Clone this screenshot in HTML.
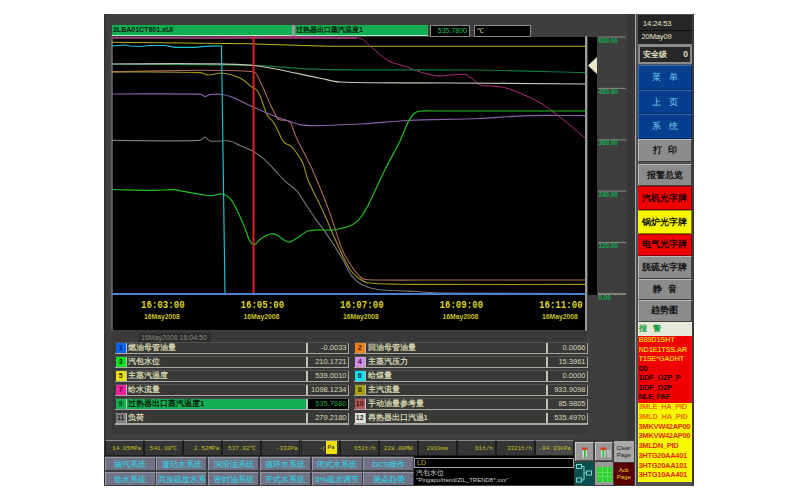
<!DOCTYPE html>
<html><head><meta charset="utf-8">
<style>
*{margin:0;padding:0;box-sizing:border-box}
html,body{width:800px;height:500px;background:#fff;overflow:hidden;font-family:"Liberation Sans",sans-serif}
.a{position:absolute}
svg{position:absolute;left:0;top:0}
.gb{background:#12ae52;color:#03200a;font-size:7px;font-weight:bold;line-height:10px;white-space:nowrap;overflow:hidden;border-bottom:1px solid #b0e8c8}
.axl{left:598.5px;color:#10b050;font-size:6.3px;line-height:6px;font-weight:bold}
.tl{top:300.5px;color:#d8d020;font-size:9.1px;line-height:8px;font-weight:bold;font-family:"Liberation Mono",monospace;white-space:nowrap;transform:scaleY(1.22);transform-origin:0 0}
.dl{top:313.5px;color:#c8c020;font-size:6.8px;line-height:6px;white-space:nowrap;font-weight:bold}
.cb{width:9.5px;height:10px;font-size:7px;line-height:10px;text-align:center;font-weight:bold}
.nf{height:10px;font-size:7.5px;font-weight:bold;line-height:10px;padding-left:1.5px;white-space:nowrap;overflow:hidden}
.sep{width:2px;height:10px;background:#c0c0b8}
.vf{height:10px;font-size:7.5px;line-height:10px;text-align:right;padding-right:1px;white-space:nowrap}
.rbd{height:1.5px;background:#a8a8a0}
.st{top:439.5px;height:16px;font-size:6px;line-height:15px;color:#c8c020;font-family:"Liberation Mono",monospace;white-space:nowrap;border:1px solid #1c1c1c;border-top:1px solid #8a8a8a;padding:0 2px}
.hl{background:#f0e010;color:#202000;display:inline-block;width:11px;height:13px;line-height:13px;vertical-align:middle;text-align:center}
.nb{width:51px;height:14px;background:#727286;color:#18e0f0;font-size:8px;line-height:13px;text-align:center;white-space:nowrap;overflow:hidden;border-top:1px solid #9a9aa6;border-left:1px solid #9a9aa6;border-right:1px solid #3a3a44;border-bottom:1px solid #3a3a44}
.rt{color:#e8e8c8;font-size:7.5px;line-height:8px;white-space:nowrap;letter-spacing:-0.1px}
.rb{left:637.5px;width:54.5px;font-size:8.5px;text-align:center;white-space:nowrap;border:1px solid;font-family:"Liberation Serif",serif;font-weight:bold}
.bl{background:#073e8e;color:#70d0f0;font-weight:normal !important;border-color:#2a6ac0 #062a60 #062a60 #2a6ac0}
.gr{background:#8c8c8c;color:#101010;border-color:#b8b8b8 #404040 #404040 #b8b8b8}
.rd{background:#f00000;color:#200000;border-color:#a00000 #800000 #800000 #f00000}
.yl{background:#f8f800;color:#101000;border-color:#a0a000 #808000 #808000 #f8f800}
.al{left:638.5px;font-size:7.5px;line-height:9px;white-space:nowrap;overflow:hidden;width:53px;font-weight:bold;letter-spacing:-0.3px}
.ib{border-top:1px solid #c8c8c8;border-left:1px solid #c8c8c8;border-right:1px solid #505050;border-bottom:1px solid #505050}
#wrap{position:absolute;left:0;top:0;width:800px;height:500px;}
</style></head><body><div id="wrap">

<div class="a" style="left:104px;top:14px;width:531px;height:472px;background:#3e3e3e;border-left:2px solid #333"></div>
<div class="a" style="left:627px;top:14px;width:8px;height:425px;background:#373737"></div>
<div class="a" style="left:112px;top:331px;width:475px;height:103px;background:#393939"></div>
<div class="a gb" style="left:112px;top:25px;width:180px;height:11px;padding-left:1px">3LBA01CT601.xUI</div>
<div class="a" style="left:292px;top:25px;width:3px;height:11px;background:#9a9a9a"></div>
<div class="a gb" style="left:295px;top:25px;width:133px;height:11px;padding-left:1px">过热器出口蒸汽温度1</div>
<div class="a" style="left:430px;top:25px;width:40px;height:12px;background:#000;border:1px solid #8a8a8a;color:#18c060;font-size:7px;line-height:10px;text-align:right;padding-right:2px">535.7800</div>
<div class="a" style="left:474px;top:25px;width:57px;height:12px;background:#000;border:1px solid #8a8a8a;color:#d8d8c0;font-size:7px;line-height:10px;padding-left:2px">℃</div>
<div class="a" style="left:112px;top:37px;width:474px;height:293px;background:#000"></div>
<div class="a" style="left:588px;top:37px;width:9px;height:258px;background:#000"></div>
<svg width="800" height="500" viewBox="0 0 800 500"><g fill="none" stroke-linejoin="round" stroke-linecap="round">
<line x1="112" y1="37" x2="112" y2="330" stroke="#707070" stroke-width="1.5"/>
<line x1="586" y1="37" x2="586" y2="330" stroke="#9a9a9a" stroke-width="2"/>
<path d="M112.0,42.3 L250.0,43.8 L330.0,46.2 L585.0,46.3" stroke="#b8b020" stroke-width="1.08"/>
<path d="M112.0,38.0 C194.0,38.0 276.1,34.9 358.0,38.0 C363.7,38.2 367.5,44.4 372.0,47.8 C377.5,51.9 382.0,57.3 388.0,60.6 C393.9,63.8 400.7,64.8 407.0,67.0 C411.4,68.6 415.5,70.7 420.0,72.0 C425.9,73.7 431.9,75.4 438.0,76.0 C442.0,76.4 446.0,75.2 450.0,75.0 C455.0,74.7 460.0,74.0 465.0,74.5 C466.9,74.7 468.4,76.0 470.0,77.0 C471.8,78.2 473.3,79.7 475.0,81.0 C476.7,82.3 478.0,84.3 480.0,85.0 C483.2,86.1 486.7,85.7 490.0,86.0 C493.3,86.3 496.7,86.3 500.0,86.8 C503.4,87.3 506.8,88.1 510.0,89.2 C515.5,91.1 520.8,93.4 526.0,95.8 C531.4,98.3 536.9,100.7 542.0,103.8 C547.0,106.8 551.4,110.7 556.0,114.2 C560.7,117.8 565.4,121.4 570.0,125.2 C575.1,129.4 580.0,133.7 585.0,138.0" stroke="#b02a78" stroke-width="0.99"/>
<path d="M112.0,64.0 C159.0,64.5 206.0,64.2 253.0,65.4 C275.4,66.0 297.6,68.9 320.0,69.4 C370.0,70.5 420.0,69.4 470.0,70.0 C508.3,70.5 546.7,71.7 585.0,72.6" stroke="#0e7a40" stroke-width="1.17"/>
<path d="M112.0,64.0 C141.3,63.9 170.7,63.5 200.0,63.8 C217.7,64.0 235.5,63.3 253.0,65.4 C275.6,68.1 297.7,73.9 320.0,78.2 C326.7,79.5 333.2,81.7 340.0,82.0 C376.6,83.4 413.3,82.7 450.0,83.0 C495.0,83.4 540.0,83.7 585.0,84.0" stroke="#c8c8b8" stroke-width="1.17"/>
<path d="M112.0,71.6 C159.0,71.7 206.1,68.2 253.0,71.8 C257.5,72.1 258.7,79.0 260.8,83.0 C264.4,89.7 266.9,96.9 270.0,103.8 C271.1,106.3 272.3,108.8 273.6,111.2 C275.1,113.9 275.8,117.5 278.4,119.2 C281.1,121.0 285.0,119.7 288.0,120.8 C289.4,121.3 290.5,122.7 291.2,124.0 C293.2,128.1 294.1,132.6 296.0,136.8 C298.4,142.2 301.3,147.5 304.0,152.8 C306.7,158.1 309.6,163.3 312.0,168.8 C317.9,182.4 323.6,196.1 328.8,210.0 C333.7,223.2 337.1,237.0 342.4,250.0 C344.8,256.0 348.4,261.5 352.0,266.8 C354.8,270.9 357.8,274.9 361.6,278.0 C363.3,279.4 365.8,279.7 368.0,279.8 C392.0,280.4 416.0,280.0 440.0,280.0 C488.3,280.0 536.7,280.0 585.0,280.0" stroke="#b06858" stroke-width="1.08"/>
<path d="M112.0,72.0 C141.3,72.2 170.7,71.7 200.0,72.6 C202.8,72.7 205.2,74.9 208.0,75.0 C212.7,75.1 217.3,72.6 222.0,73.0 C228.2,73.6 234.4,75.3 240.0,78.0 C244.9,80.3 248.6,84.6 253.0,87.8 C254.5,88.9 256.6,89.4 257.6,91.0 C259.8,94.3 260.9,98.3 262.4,102.0 C264.1,106.3 265.0,111.0 267.2,115.0 C268.8,117.9 271.8,119.7 273.6,122.4 C275.9,125.9 277.3,129.9 279.2,133.6 C280.7,136.6 281.7,140.0 284.0,142.4 C285.9,144.4 289.1,144.6 291.2,146.4 C293.8,148.7 295.7,151.6 297.6,154.4 C299.7,157.5 301.8,160.6 303.2,164.0 C305.3,169.2 305.9,174.9 308.0,180.0 C312.3,190.2 317.8,199.9 322.4,210.0 C328.5,223.2 333.8,236.8 340.0,250.0 C343.2,256.8 346.3,263.7 350.4,270.0 C352.5,273.2 355.4,275.8 358.4,278.0 C361.3,280.1 364.5,282.3 368.0,282.8 C378.6,284.4 389.3,284.0 400.0,284.2 C413.3,284.5 426.7,284.4 440.0,284.4 C488.3,284.5 536.7,284.4 585.0,284.4" stroke="#a09818" stroke-width="1.08"/>
<path d="M112.0,94.0 C141.3,94.1 170.7,93.4 200.0,94.2 C201.8,94.2 203.2,96.4 205.0,96.5 C206.8,96.6 208.2,94.7 210.0,94.5 C214.0,94.0 218.0,94.0 222.0,94.5 C225.4,94.9 228.8,95.9 232.0,97.0 C234.8,98.0 237.3,99.5 240.0,100.8 C244.3,102.9 248.6,105.0 253.0,107.0 C259.3,109.8 265.6,112.7 272.0,115.2 C277.3,117.3 282.6,119.0 288.0,120.8 C292.2,122.2 296.4,124.0 300.8,124.8 C305.5,125.6 310.3,125.7 315.0,125.6 C330.0,125.4 345.0,124.8 360.0,124.0 C376.0,123.1 392.0,121.2 408.0,120.5 C432.0,119.4 456.0,119.5 480.0,118.5 C496.0,117.8 512.0,116.0 528.0,115.6 C547.0,115.1 566.0,115.6 585.0,115.6" stroke="#8860a8" stroke-width="1.17"/>
<path d="M112.0,140.4 C141.3,140.4 170.7,141.5 200.0,140.4 C202.0,140.3 203.0,136.9 205.0,137.0 C207.1,137.1 207.9,140.7 210.0,141.0 C216.6,142.1 223.4,140.0 230.0,141.0 C233.6,141.6 236.6,144.1 240.0,145.6 C244.3,147.5 248.9,148.9 253.0,151.2 C256.9,153.4 260.6,156.3 264.0,159.2 C267.4,162.1 270.5,165.5 273.6,168.8 C276.9,172.2 279.9,175.8 283.2,179.2 C284.7,180.8 286.3,182.2 288.0,183.6 C290.9,186.1 294.3,187.9 296.8,190.8 C300.5,195.2 303.2,200.4 306.4,205.2 C309.6,210.0 312.7,214.9 316.0,219.6 C319.1,224.0 322.6,228.0 325.6,232.4 C331.4,241.1 337.0,249.9 342.4,258.8 C345.8,264.5 348.0,271.1 352.0,276.4 C354.5,279.7 357.9,282.4 361.6,284.4 C366.1,286.8 371.0,288.4 376.0,289.2 C383.9,290.5 392.0,290.3 400.0,290.8 C405.3,291.1 410.7,291.2 416.0,291.5 C424.0,291.9 432.0,292.9 440.0,293.0 C488.3,293.6 536.7,293.3 585.0,293.5" stroke="#7a7a7a" stroke-width="1.08"/>
<path d="M112.0,189.5 C126.3,189.8 140.7,190.4 155.0,190.4 C160.7,190.4 166.3,189.4 172.0,189.6 C175.4,189.7 178.7,190.6 182.0,191.2 C189.0,192.4 196.0,193.8 203.0,194.8 C206.0,195.2 209.0,195.7 212.0,195.6 C215.4,195.5 218.7,193.4 222.0,194.0 C225.2,194.6 228.3,196.3 230.4,198.8 C234.0,203.0 235.9,208.3 238.4,213.2 C240.7,217.9 242.8,222.7 244.8,227.6 C246.5,231.8 247.3,236.4 249.6,240.4 C250.6,242.2 252.3,244.7 254.4,244.4 C257.2,244.0 258.4,240.3 260.8,238.8 C263.8,236.9 266.9,234.8 270.4,234.0 C272.5,233.5 274.8,234.1 276.8,235.0 C280.8,236.8 283.7,241.1 288.0,242.0 C290.8,242.6 293.5,240.2 296.0,238.8 C300.4,236.4 303.9,232.0 308.8,230.8 C316.3,229.0 324.3,230.5 332.0,230.0 C334.7,229.8 337.4,229.4 340.0,228.8 C343.3,228.1 346.7,227.4 349.8,226.0 C352.9,224.6 355.8,222.8 358.2,220.4 C361.0,217.6 363.1,214.0 365.2,210.6 C367.8,206.2 370.0,201.6 372.2,197.0 C377.1,186.8 381.6,176.4 386.6,166.3 C390.6,158.3 395.3,150.8 399.2,142.8 C402.5,136.0 404.8,128.8 408.2,122.1 C409.7,119.2 411.3,116.3 413.6,114.0 C415.0,112.6 417.0,111.7 419.0,111.3 C422.6,110.6 426.3,111.0 430.0,111.0 C481.7,110.9 533.3,111.0 585.0,111.0" stroke="#20c020" stroke-width="1.17"/>
<path d="M112.0,46.0 L118.0,45.5 L125.0,45.0 L130.0,46.0 L140.0,46.5 L150.0,45.5 L165.0,45.5 L175.0,47.3 L195.0,47.3 L205.0,46.3 L215.0,45.8 L221.5,46.0 L225.0,294.0" stroke="#20c0d0" stroke-width="1.17"/>
<line x1="112" y1="38" x2="356" y2="38" stroke="#8a3468" stroke-width="1.8"/>
<line x1="253.5" y1="37" x2="253.5" y2="294" stroke="#e02020" stroke-width="2"/>
<line x1="112" y1="294" x2="585" y2="294" stroke="#4a80d0" stroke-width="2"/>
</g><polygon points="588,65.5 597,57 597,74" fill="#e8e8c8"/><g stroke="#8a8a80" stroke-width="1">
<line x1="598" y1="37" x2="626" y2="37"/>
<line x1="598" y1="88.4" x2="626" y2="88.4"/>
<line x1="598" y1="139.8" x2="626" y2="139.8"/>
<line x1="598" y1="191.2" x2="626" y2="191.2"/>
<line x1="598" y1="242.6" x2="626" y2="242.6"/>
<line x1="598" y1="294" x2="626" y2="294" stroke="#c8c8b0"/></g></svg>
<div class="a axl" style="top:38px">600.00</div>
<div class="a axl" style="top:89px">480.00</div>
<div class="a axl" style="top:140px">360.00</div>
<div class="a axl" style="top:192px">240.00</div>
<div class="a axl" style="top:243px">120.00</div>
<div class="a axl" style="top:295px">0.00</div>
<div class="a tl" style="left:141.0px">16:03:00</div>
<div class="a dl" style="left:144.0px">16May2008</div>
<div class="a tl" style="left:240.5px">16:05:00</div>
<div class="a dl" style="left:243.5px">16May2008</div>
<div class="a tl" style="left:340.0px">16:07:00</div>
<div class="a dl" style="left:343.0px">16May2008</div>
<div class="a tl" style="left:439.5px">16:09:00</div>
<div class="a dl" style="left:442.5px">16May2008</div>
<div class="a tl" style="left:539.0px">16:11:00</div>
<div class="a dl" style="left:542.0px">16May2008</div>
<div class="a" style="left:139px;top:333px;width:72px;height:9px;background:#2c2c2c;color:#8a8a80;font-size:7px;line-height:9px;padding-left:2px;white-space:nowrap">16May2008 16:04:50</div>
<div class="a" style="left:115px;top:342.0px;width:232.5px;height:1px;background:#555350"></div>
<div class="a cb" style="left:116px;top:342.5px;background:#0a64f0;color:#002060">1</div>
<div class="a sep" style="left:125.5px;top:342.5px;width:1.5px"></div>
<div class="a nf" style="left:126.5px;top:342.5px;width:179.5px;background:#383836;color:#d4d4b0">燃油母管油量</div>
<div class="a sep" style="left:306.0px;top:342.5px"></div>
<div class="a vf" style="left:308px;top:342.5px;width:39.5px;background:#383836;color:#d8d8b8">-0.0033</div>
<div class="a" style="left:347.5px;top:342.5px;width:1px;height:10px;background:#a8a8a0"></div>
<div class="a rbd" style="left:115px;top:352.5px;width:233.5px"></div>
<div class="a" style="left:354px;top:342.0px;width:232.5px;height:1px;background:#555350"></div>
<div class="a cb" style="left:355px;top:342.5px;background:#f08010;color:#402000">2</div>
<div class="a sep" style="left:364.5px;top:342.5px;width:1.5px"></div>
<div class="a nf" style="left:366px;top:342.5px;width:179.5px;background:#383836;color:#d4d4b0">回油母管油量</div>
<div class="a sep" style="left:545.5px;top:342.5px"></div>
<div class="a vf" style="left:547.5px;top:342.5px;width:39px;background:#383836;color:#d8d8b8">0.0066</div>
<div class="a" style="left:586.5px;top:342.5px;width:1px;height:10px;background:#a8a8a0"></div>
<div class="a rbd" style="left:354px;top:352.5px;width:233.5px"></div>
<div class="a" style="left:115px;top:356.1px;width:232.5px;height:1px;background:#555350"></div>
<div class="a cb" style="left:116px;top:356.6px;background:#10e020;color:#003000">3</div>
<div class="a sep" style="left:125.5px;top:356.6px;width:1.5px"></div>
<div class="a nf" style="left:126.5px;top:356.6px;width:179.5px;background:#383836;color:#d4d4b0">汽包水位</div>
<div class="a sep" style="left:306.0px;top:356.6px"></div>
<div class="a vf" style="left:308px;top:356.6px;width:39.5px;background:#383836;color:#d8d8b8">210.1721</div>
<div class="a" style="left:347.5px;top:356.6px;width:1px;height:10px;background:#a8a8a0"></div>
<div class="a rbd" style="left:115px;top:366.6px;width:233.5px"></div>
<div class="a" style="left:354px;top:356.1px;width:232.5px;height:1px;background:#555350"></div>
<div class="a cb" style="left:355px;top:356.6px;background:#d090e8;color:#301040">4</div>
<div class="a sep" style="left:364.5px;top:356.6px;width:1.5px"></div>
<div class="a nf" style="left:366px;top:356.6px;width:179.5px;background:#383836;color:#d4d4b0">主蒸汽压力</div>
<div class="a sep" style="left:545.5px;top:356.6px"></div>
<div class="a vf" style="left:547.5px;top:356.6px;width:39px;background:#383836;color:#d8d8b8">15.3961</div>
<div class="a" style="left:586.5px;top:356.6px;width:1px;height:10px;background:#a8a8a0"></div>
<div class="a rbd" style="left:354px;top:366.6px;width:233.5px"></div>
<div class="a" style="left:115px;top:370.2px;width:232.5px;height:1px;background:#555350"></div>
<div class="a cb" style="left:116px;top:370.7px;background:#e8e010;color:#303000">5</div>
<div class="a sep" style="left:125.5px;top:370.7px;width:1.5px"></div>
<div class="a nf" style="left:126.5px;top:370.7px;width:179.5px;background:#383836;color:#d4d4b0">主蒸汽温度</div>
<div class="a sep" style="left:306.0px;top:370.7px"></div>
<div class="a vf" style="left:308px;top:370.7px;width:39.5px;background:#383836;color:#d8d8b8">539.0010</div>
<div class="a" style="left:347.5px;top:370.7px;width:1px;height:10px;background:#a8a8a0"></div>
<div class="a rbd" style="left:115px;top:380.7px;width:233.5px"></div>
<div class="a" style="left:354px;top:370.2px;width:232.5px;height:1px;background:#555350"></div>
<div class="a cb" style="left:355px;top:370.7px;background:#10e0f0;color:#003040">6</div>
<div class="a sep" style="left:364.5px;top:370.7px;width:1.5px"></div>
<div class="a nf" style="left:366px;top:370.7px;width:179.5px;background:#383836;color:#d4d4b0">给煤量</div>
<div class="a sep" style="left:545.5px;top:370.7px"></div>
<div class="a vf" style="left:547.5px;top:370.7px;width:39px;background:#383836;color:#d8d8b8">0.0000</div>
<div class="a" style="left:586.5px;top:370.7px;width:1px;height:10px;background:#a8a8a0"></div>
<div class="a rbd" style="left:354px;top:380.7px;width:233.5px"></div>
<div class="a" style="left:115px;top:384.3px;width:232.5px;height:1px;background:#555350"></div>
<div class="a cb" style="left:116px;top:384.8px;background:#f020a0;color:#500030">7</div>
<div class="a sep" style="left:125.5px;top:384.8px;width:1.5px"></div>
<div class="a nf" style="left:126.5px;top:384.8px;width:179.5px;background:#383836;color:#d4d4b0">给水流量</div>
<div class="a sep" style="left:306.0px;top:384.8px"></div>
<div class="a vf" style="left:308px;top:384.8px;width:39.5px;background:#383836;color:#d8d8b8">1098.1234</div>
<div class="a" style="left:347.5px;top:384.8px;width:1px;height:10px;background:#a8a8a0"></div>
<div class="a rbd" style="left:115px;top:394.8px;width:233.5px"></div>
<div class="a" style="left:354px;top:384.3px;width:232.5px;height:1px;background:#555350"></div>
<div class="a cb" style="left:355px;top:384.8px;background:#a8a010;color:#302c00">8</div>
<div class="a sep" style="left:364.5px;top:384.8px;width:1.5px"></div>
<div class="a nf" style="left:366px;top:384.8px;width:179.5px;background:#383836;color:#d4d4b0">主汽流量</div>
<div class="a sep" style="left:545.5px;top:384.8px"></div>
<div class="a vf" style="left:547.5px;top:384.8px;width:39px;background:#383836;color:#d8d8b8">933.9098</div>
<div class="a" style="left:586.5px;top:384.8px;width:1px;height:10px;background:#a8a8a0"></div>
<div class="a rbd" style="left:354px;top:394.8px;width:233.5px"></div>
<div class="a" style="left:115px;top:398.4px;width:232.5px;height:1px;background:#555350"></div>
<div class="a cb" style="left:116px;top:398.9px;background:#10b050;color:#003010">9</div>
<div class="a sep" style="left:125.5px;top:398.9px;width:1.5px"></div>
<div class="a nf" style="left:126.5px;top:398.9px;width:179.5px;background:#12ae52;color:#042008">过热器出口蒸汽温度1</div>
<div class="a sep" style="left:306.0px;top:398.9px"></div>
<div class="a vf" style="left:308px;top:398.9px;width:39.5px;background:#000;color:#10a040">535.7680</div>
<div class="a" style="left:347.5px;top:398.9px;width:1px;height:10px;background:#a8a8a0"></div>
<div class="a rbd" style="left:115px;top:408.9px;width:233.5px"></div>
<div class="a" style="left:354px;top:398.4px;width:232.5px;height:1px;background:#555350"></div>
<div class="a cb" style="left:355px;top:398.9px;background:#b05858;color:#401010">10</div>
<div class="a sep" style="left:364.5px;top:398.9px;width:1.5px"></div>
<div class="a nf" style="left:366px;top:398.9px;width:179.5px;background:#383836;color:#d4d4b0">手动油量参考量</div>
<div class="a sep" style="left:545.5px;top:398.9px"></div>
<div class="a vf" style="left:547.5px;top:398.9px;width:39px;background:#383836;color:#d8d8b8">85.9805</div>
<div class="a" style="left:586.5px;top:398.9px;width:1px;height:10px;background:#a8a8a0"></div>
<div class="a rbd" style="left:354px;top:408.9px;width:233.5px"></div>
<div class="a" style="left:115px;top:412.5px;width:232.5px;height:1px;background:#555350"></div>
<div class="a cb" style="left:116px;top:413.0px;background:#808080;color:#202020">11</div>
<div class="a sep" style="left:125.5px;top:413.0px;width:1.5px"></div>
<div class="a nf" style="left:126.5px;top:413.0px;width:179.5px;background:#383836;color:#d4d4b0">负荷</div>
<div class="a sep" style="left:306.0px;top:413.0px"></div>
<div class="a vf" style="left:308px;top:413.0px;width:39.5px;background:#383836;color:#d8d8b8">279.2180</div>
<div class="a" style="left:347.5px;top:413.0px;width:1px;height:10px;background:#a8a8a0"></div>
<div class="a rbd" style="left:115px;top:423.0px;width:233.5px"></div>
<div class="a" style="left:354px;top:412.5px;width:232.5px;height:1px;background:#555350"></div>
<div class="a cb" style="left:355px;top:413.0px;background:#e0e0d8;color:#303030">12</div>
<div class="a sep" style="left:364.5px;top:413.0px;width:1.5px"></div>
<div class="a nf" style="left:366px;top:413.0px;width:179.5px;background:#383836;color:#d4d4b0">再热器出口汽温1</div>
<div class="a sep" style="left:545.5px;top:413.0px"></div>
<div class="a vf" style="left:547.5px;top:413.0px;width:39px;background:#383836;color:#d8d8b8">535.4970</div>
<div class="a" style="left:586.5px;top:413.0px;width:1px;height:10px;background:#a8a8a0"></div>
<div class="a rbd" style="left:354px;top:423.0px;width:233.5px"></div>
<div class="a st" style="left:105.0px;width:39.1px;text-align:right;background:#353535">14.05MPa</div>
<div class="a st" style="left:144.1px;width:39.1px;text-align:center;background:#353535">541.00℃</div>
<div class="a st" style="left:183.2px;width:39.1px;text-align:right;background:#353535">2.52MPa</div>
<div class="a st" style="left:222.3px;width:39.1px;text-align:center;background:#353535">537.02℃</div>
<div class="a st" style="left:261.4px;width:39.1px;text-align:right;background:#353535">-332Pa</div>
<div class="a st" style="left:300.5px;width:39.1px;text-align:right;background:#353535">-(<span class='hl'>Pa</span></div>
<div class="a st" style="left:339.6px;width:39.1px;text-align:right;background:#353535">652t/h</div>
<div class="a st" style="left:378.7px;width:39.1px;text-align:center;background:#353535">228.00MW</div>
<div class="a st" style="left:417.8px;width:39.1px;text-align:center;background:#353535">2810mm</div>
<div class="a st" style="left:456.9px;width:39.1px;text-align:right;background:#353535">61t/h</div>
<div class="a st" style="left:496.0px;width:39.1px;text-align:right;background:#353535">3321t/h</div>
<div class="a st" style="left:535.1px;width:39.1px;text-align:center;background:#484848">-94.33kPa</div>
<div class="a nb" style="left:104.5px;top:456.5px">抽汽系统</div>
<div class="a nb" style="left:156.3px;top:456.5px">凝结水系统</div>
<div class="a nb" style="left:208px;top:456.5px">润滑油系统</div>
<div class="a nb" style="left:259.8px;top:456.5px">循环水系统</div>
<div class="a nb" style="left:311.6px;top:456.5px">闭式水系统</div>
<div class="a nb" style="left:363.3px;top:456.5px">DCS操作</div>
<div class="a nb" style="left:104.5px;top:471.5px">给水系统</div>
<div class="a nb" style="left:156.3px;top:471.5px">高加疏放水系</div>
<div class="a nb" style="left:208px;top:471.5px">密封油系统</div>
<div class="a nb" style="left:259.8px;top:471.5px">开式水系统</div>
<div class="a nb" style="left:311.6px;top:471.5px">5%疏水调节</div>
<div class="a nb" style="left:363.3px;top:471.5px">测点趋势</div>
<div class="a" style="left:414px;top:456px;width:160px;height:29px;background:#000"></div>
<div class="a" style="left:414px;top:458px;width:160px;height:10px;border:1px solid #a0a0a0;background:#000;color:#c0b020;font-size:7px;line-height:8px;padding-left:2px">LD</div>
<div class="a" style="left:416px;top:469px;color:#d0d0d0;font-size:7px;line-height:7px;white-space:nowrap">汽包水位</div>
<div class="a" style="left:416px;top:476.5px;color:#d0d0d0;font-size:6px;line-height:7px;white-space:nowrap">"Pingapo/trend/ZIL_TREND8*.xxx"</div>
<div class="a" style="left:635px;top:14px;width:59px;height:471.5px;background:#505050;border-left:1px solid #a8a8a8;border-right:2px solid #3c3c3c"></div>
<div class="a" style="left:637.5px;top:15px;width:54.5px;height:29px;background:#262626"></div>
<div class="a" style="left:637.5px;top:29.5px;width:54.5px;height:1px;background:#101010"></div>
<div class="a rt" style="left:643px;top:20px">14:24:53</div>
<div class="a rt" style="left:641.5px;top:33px">20May09</div>
<div class="a" style="left:637.5px;top:44px;width:54.5px;height:20px;background:#8a8a8a"></div>
<div class="a" style="left:640px;top:46.5px;width:49.5px;height:15px;background:#262626;color:#e0e0c0;font-size:7.5px;line-height:15px;padding-left:3px;white-space:nowrap;font-weight:bold">安全级<span style="position:absolute;right:1.5px;top:0;font-size:8.5px">0</span></div>
<div class="a rb bl" style="top:64.5px;height:25.0px;line-height:23.0px">菜&nbsp;&nbsp;&nbsp;&nbsp;单</div>
<div class="a rb bl" style="top:89.5px;height:24.5px;line-height:22.5px">上&nbsp;&nbsp;&nbsp;&nbsp;页</div>
<div class="a rb bl" style="top:114px;height:24.5px;line-height:22.5px">系&nbsp;&nbsp;&nbsp;&nbsp;统</div>
<div class="a rb gr" style="top:139px;height:23px;line-height:21px">打&nbsp;&nbsp;&nbsp;印</div>
<div class="a rb gr" style="top:163.5px;height:22.5px;line-height:20.5px">报警总览</div>
<div class="a rb rd" style="top:186px;height:24px;line-height:22px">汽机光字牌</div>
<div class="a rb yl" style="top:210px;height:24px;line-height:22px">锅炉光字牌</div>
<div class="a rb rd" style="top:234px;height:21.5px;line-height:19.5px">电气光字牌</div>
<div class="a rb gr" style="top:255.5px;height:23.0px;line-height:21.0px">脱硫光字牌</div>
<div class="a rb gr" style="top:278.5px;height:21.5px;line-height:19.5px">静&nbsp;&nbsp;&nbsp;音</div>
<div class="a rb gr" style="top:300px;height:21.5px;line-height:19.5px">趋势图</div>
<div class="a" style="left:637.5px;top:321.5px;width:54.5px;height:14.5px;background:#e8e8d8;color:#10a040;font-size:8px;font-weight:bold;line-height:14px;padding-left:1px">报&nbsp;&nbsp;&nbsp;警</div>
<div class="a" style="left:637.5px;top:336px;width:54.5px;height:67px;background:#f00000"></div>
<div class="a" style="left:637.5px;top:403px;width:54.5px;height:80px;background:#f8f800;border-bottom:1px solid #505050"></div>
<div class="a al" style="top:335.0px;color:#f0c000">B89D1SHT</div>
<div class="a al" style="top:344.6px;color:#f0c000">ND1E1TSS.AR</div>
<div class="a al" style="top:354.1px;color:#f0c000">T1SE*GADHT</div>
<div class="a al" style="top:363.7px;color:#280000">D0</div>
<div class="a al" style="top:373.2px;color:#280000">1IDF_OZP_P</div>
<div class="a al" style="top:382.8px;color:#280000">1IDF_OZP</div>
<div class="a al" style="top:392.3px;color:#280000">NLE_PAF</div>
<div class="a al" style="top:402.0px;color:#f07000">3MLE_HA_PID</div>
<div class="a al" style="top:411.8px;color:#f07000">3MLD_HA_PID</div>
<div class="a al" style="top:421.5px;color:#e03000">3MKVW42AP00</div>
<div class="a al" style="top:431.2px;color:#e03000">3MKVW42AP00</div>
<div class="a al" style="top:441.0px;color:#e03000">3MLDN_PID</div>
<div class="a al" style="top:450.8px;color:#e03000">3HTG20AA401</div>
<div class="a al" style="top:460.5px;color:#e03000">3HTG20AA101</div>
<div class="a al" style="top:470.2px;color:#e03000">3HTG10AA401</div>
<div class="a" style="left:574px;top:439px;width:61px;height:46px;background:#3a3a3a"></div>
<div class="a ib" style="left:575px;top:441.5px;width:18.5px;height:19px;background:#9a9a9a">
<svg width="18" height="19"><rect x="6" y="4.5" width="5.5" height="2.5" fill="#e83010"/><rect x="6.5" y="7" width="4.5" height="7.5" fill="#d8d8d8"/><rect x="8" y="6.5" width="1.6" height="8" fill="#10c020"/></svg></div>
<div class="a ib" style="left:594.5px;top:441.5px;width:18.5px;height:19px;background:#9a9a9a">
<svg width="18" height="19"><rect x="4.5" y="4.5" width="5.5" height="2.5" fill="#e83010"/><rect x="5" y="7" width="4.5" height="7.5" fill="#d8d8d8"/><rect x="6.5" y="6.5" width="1.6" height="8" fill="#10c020"/><rect x="10.5" y="6" width="5" height="9" fill="#b8b8b8" stroke="#808080" stroke-width=".6"/></svg></div>
<div class="a" style="left:613.5px;top:440.5px;width:20.5px;height:21.5px;background:#a8a8a8;color:#202020;font-size:6px;line-height:7px;text-align:center;padding-top:4px">Clear<br>Page</div>
<div class="a" style="left:574.5px;top:462px;width:19px;height:22.5px;background:#0a4e4e">
<svg width="19" height="23" fill="none" stroke="#70d8d8" stroke-width="1"><rect x="1.5" y="2.5" width="5" height="4"/><rect x="1.5" y="16" width="5" height="4"/><rect x="11.5" y="9" width="5" height="4"/><path d="M6.5,4.5 H9 V18 H6.5 M9,11 H11.5"/></svg></div>
<div class="a" style="left:594.5px;top:462px;width:18.5px;height:22.5px;background:#9a9a9a"><div style="position:absolute;left:2px;top:4.5px;width:15px;height:15px;background:#30d030;background-image:linear-gradient(90deg,transparent 4.5px,#60e060 4.5px,#60e060 5.5px,transparent 5.5px,transparent 9.5px,#60e060 9.5px,#60e060 10.5px,transparent 10.5px),linear-gradient(0deg,transparent 4.5px,#60e060 4.5px,#60e060 5.5px,transparent 5.5px,transparent 9.5px,#60e060 9.5px,#60e060 10.5px,transparent 10.5px)"></div></div>
<div class="a" style="left:613.5px;top:462.5px;width:20.5px;height:22px;background:#580000;color:#f0d020;font-size:6px;line-height:7px;text-align:center;padding-top:4px">Ack<br>Page</div>
</div></body></html>
